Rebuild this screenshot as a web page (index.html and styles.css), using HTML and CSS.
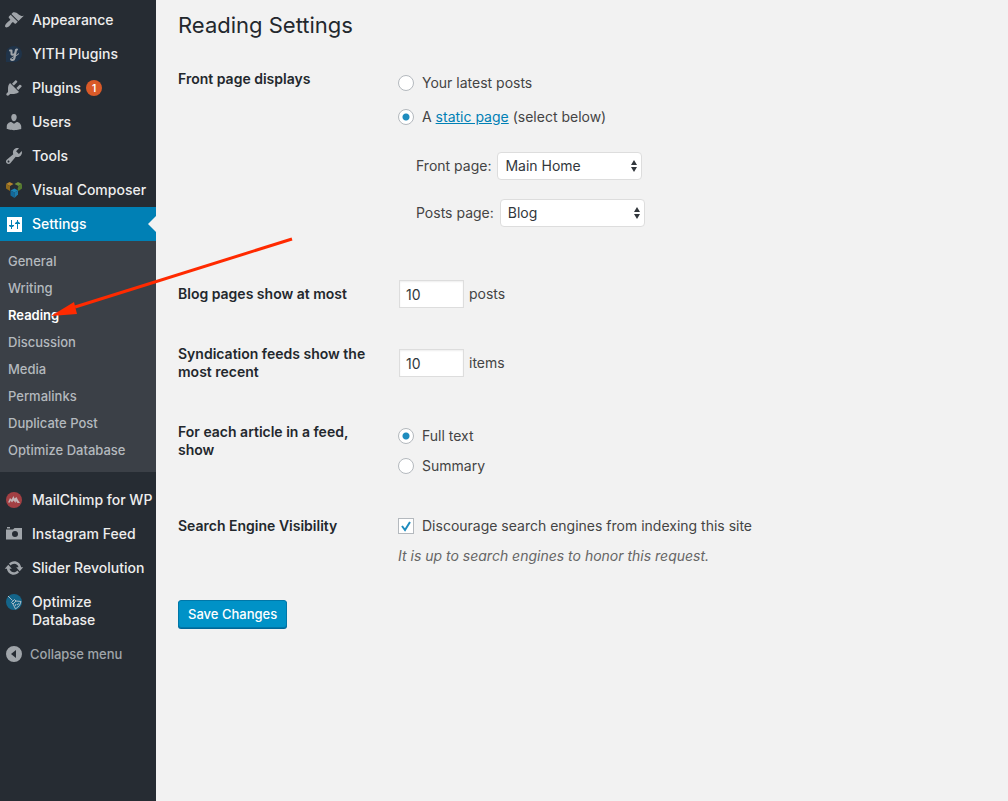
FILE: index.html
```html
<!DOCTYPE html>
<html lang="en">
<head>
    <meta charset="UTF-8">
    <meta name="viewport" content="width=device-width, initial-scale=1.0">
    <title>Reading Settings</title>
    <link rel="stylesheet" href="styles.css">
</head>
<body>
    <nav class="sidebar">
        <ul class="menu">
            <li><a class="menu-item" href="#">
                <svg class="icon" viewBox="0 0 20 20"><path d="M14.48 11.06L7.41 3.99l1.5-1.5c.5-.56 2.3-.47 3.51.32 1.21.8 1.43 1.28 2.91 2.1 1.18.64 2.45 1.26 4.45.85zm-.71.71L6.7 4.7 4.93 6.47c-.39.39-.39 1.02 0 1.41l1.06 1.06c.39.39.39 1.03 0 1.42-.6.6-1.43 1.11-2.21 1.69-.35.26-.7.53-1.01.84C1.43 14.23.4 16.08 1.4 17.07c.99 1 2.84-.03 4.18-1.36.31-.31.58-.66.85-1.02.57-.78 1.08-1.61 1.69-2.21.39-.39 1.02-.39 1.41 0l1.06 1.06c.39.39 1.02.39 1.41 0z"/></svg>
                Appearance
            </a></li>
            <li><a class="menu-item" href="#">
                <svg class="icon" viewBox="0 0 20 20"><path fill="#1f3349" d="M10 2a8 8 0 1 1 0 16H2v-8a8 8 0 0 1 8-8z"/><path fill="none" stroke="#a0a5aa" stroke-width="2" stroke-linecap="round" stroke-linejoin="round" d="M6 6.500h1.500v3.500c.5 1.200 2.500 1 3.500-.5l1-3.500-1.500 8c-.5 2.500-3 2.500-3.500 1.200M12 6l1-.5"/><path fill="none" stroke="#a0a5aa" d="M7.500 14c2-1.500 5-2 7.500-4.500"/></svg>
                YITH Plugins
            </a></li>
            <li><a class="menu-item" href="#">
                <svg class="icon" viewBox="0 0 20 20"><path d="M13.110 4.360L9.870 7.600 8 5.730l3.240-3.240c.35-.34 1.050-.2 1.560.32.52.51.66 1.210.31 1.550zm-8 1.770l.91-1.120 9.010 9.010-1.190.84c-.71.71-2.630 1.160-3.820 1.160H6.140L4.900 17.260c-.59.59-1.540.59-2.120 0-.59-.58-.59-1.530 0-2.120l1.240-1.240v-3.880c0-1.130.4-3.190 1.090-3.890zm7.260 3.970l3.240-3.240c.34-.35 1.040-.21 1.550.31.52.51.66 1.210.31 1.550l-3.240 3.250z"/></svg>
                Plugins <span class="count">1</span>
            </a></li>
            <li><a class="menu-item" href="#">
                <svg class="icon" viewBox="0 0 20 20"><path d="M10 9.250c-2.270 0-2.730-3.440-2.730-3.440C7 4.020 7.820 2 9.970 2c2.160 0 2.980 2.020 2.710 3.810 0 0-.41 3.440-2.680 3.440zm0 2.570L12.720 10c2.390 0 4.520 2.330 4.520 4.530v2.490s-3.650 1.130-7.240 1.130c-3.650 0-7.240-1.130-7.240-1.130v-2.490c0-2.250 1.940-4.480 4.470-4.480z"/></svg>
                Users
            </a></li>
            <li><a class="menu-item" href="#">
                <svg class="icon" viewBox="0 0 20 20"><path d="M16.680 9.770c-1.340 1.340-3.300 1.670-4.950.99l-5.410 6.520c-.99.99-2.590.99-3.580 0s-.99-2.590 0-3.570l6.520-5.420c-.68-1.650-.35-3.610.99-4.950 1.280-1.280 3.120-1.620 4.720-1.060l-2.890 2.890 2.820 2.820 2.860-2.870c.53 1.580.18 3.390-1.080 4.650zM3.810 16.210c.4.39 1.040.39 1.430 0 .4-.4.4-1.040 0-1.430-.39-.4-1.030-.4-1.430 0-.39.39-.39 1.030 0 1.430z"/></svg>
                Tools
            </a></li>
            <li><a class="menu-item" href="#">
                <svg class="icon" viewBox="0 0 20 20"><path fill="#b5842c" d="M2 4l3.500-2L9.500 4 6 6z"/><path fill="#8f6a1e" d="M2 4l4 2v5l-4-2.500z"/><path fill="#6f8f3a" d="M10.500 4l3.500-2 4 2-3.500 2z"/><path fill="#557a30" d="M14.500 6L18 4v4.500L14.500 11l-1-2z"/><path fill="#1c86b8" d="M6.500 10.500l4-2 3.500 2-3.500 2z"/><path fill="#12699a" d="M6.500 10.500l4 2V18l-4-2.500z"/><path fill="#1c7aa9" d="M10.500 12.500l3.500-2v4l-3.500 3.500z"/></svg>
                Visual Composer
            </a></li>
            <li>
                <a class="menu-item current" href="#">
                    <svg class="icon" viewBox="0 0 20 20"><path d="M3 3h15v15H3z"/><path class="sliders" d="M7 6h1v5h2v1l-1.500 1H8v2H7v-2h-.500L5 12v-1h2zM13 6h1v1.500l2 1.500v1h-2v5h-1v-5h-2V9l2-1.500z"/></svg>
                    Settings
                </a>
                <ul class="submenu">
                    <li><a href="#">General</a></li>
                    <li><a href="#">Writing</a></li>
                    <li><a class="active" href="#">Reading</a></li>
                    <li><a href="#">Discussion</a></li>
                    <li><a href="#">Media</a></li>
                    <li><a href="#">Permalinks</a></li>
                    <li><a href="#">Duplicate Post</a></li>
                    <li><a href="#">Optimize Database</a></li>
                </ul>
            </li>
            <li><a class="menu-item" href="#">
                <svg class="icon" viewBox="0 0 20 20"><circle cx="10" cy="10" r="8" fill="#a33f43"/><path fill="#c5b3b5" d="M4 12.500l2-4.500 1.500 1.500L9.500 6l1 2.500L12.500 7l1.500 3 2 3h-2.500l-1.500-2-.5 2-2-2.500-1.500 2-1.500-2-.5 2z"/></svg>
                MailChimp for WP
            </a></li>
            <li><a class="menu-item" href="#">
                <svg class="icon" viewBox="0 0 20 20"><path fill-rule="evenodd" d="M3 3h3v1.500H3zM2 5.500h7L10.500 4H18v11.500H2zM11 7a3 3 0 1 0 0 6 3 3 0 0 0 0-6z"/></svg>
                Instagram Feed
            </a></li>
            <li><a class="menu-item" href="#">
                <svg class="icon" viewBox="0 0 20 20"><path d="M10.200 3.280c3.530 0 6.430 2.610 6.920 6h2.080l-3.500 4-3.500-4h2.320c-.45-1.970-2.210-3.450-4.320-3.450-1.450 0-2.730.71-3.540 1.780L4.950 5.660C6.230 4.200 8.110 3.280 10.200 3.280zm-.4 13.440c-3.520 0-6.430-2.610-6.920-6H.8l3.500-4c1.170 1.330 2.330 2.670 3.500 4H5.480c.45 1.970 2.210 3.450 4.320 3.450 1.450 0 2.730-.71 3.540-1.780l1.710 1.950c-1.280 1.460-3.150 2.380-5.250 2.380z"/></svg>
                Slider Revolution
            </a></li>
            <li><a class="menu-item" href="#">
                <svg class="icon" viewBox="0 0 20 20"><circle cx="10" cy="10" r="8" fill="#14658a"/><path fill="none" stroke="#a9bcc8" stroke-width="1" stroke-linejoin="round" d="M4 4l4.500 4.500M7.500 10.500l3-3 1.500 1.500 5 .5-1.500 4-4 3.500-2.500-5zM9 12l3-3M11 14l1-2M13 13l2-1.500"/></svg>
                Optimize Database
            </a></li>
        </ul>
        <button class="collapse" type="button">
            <svg class="icon" viewBox="0 0 20 20"><path fill-rule="evenodd" d="M10 2a8 8 0 1 0 0 16 8 8 0 0 0 0-16zM12 6v8l-5-4z"/></svg>
            Collapse menu
        </button>
    </nav>

    <main class="content">
        <h1>Reading Settings</h1>
        <form>
            <div class="row" role="radiogroup" aria-labelledby="frontLabel">
                <span class="heading" id="frontLabel">Front page displays</span>
                <div class="field front">
                    <div class="option"><input type="radio" id="latest" name="front"><label for="latest">Your latest posts</label></div>
                    <div class="option"><input type="radio" id="static" name="front" checked><label for="static">A <a href="#">static page</a> (select below)</label></div>
                    <div class="pages">
                        <div class="page">
                            <label for="frontPage">Front page:</label>
                            <span class="select">
                                <select id="frontPage"><option>Main Home</option></select>
                                <svg viewBox="0 0 6 12"><path d="M0 5l3-5 3 5zM0 7h6l-3 5z"/></svg>
                            </span>
                        </div>
                        <div class="page">
                            <label for="postsPage">Posts page:</label>
                            <span class="select">
                                <select id="postsPage"><option>Blog</option></select>
                                <svg viewBox="0 0 6 12"><path d="M0 5l3-5 3 5zM0 7h6l-3 5z"/></svg>
                            </span>
                        </div>
                    </div>
                </div>
            </div>
            <div class="row">
                <label class="heading" for="blogPages">Blog pages show at most</label>
                <div class="field amount"><input type="text" id="blogPages" value="10"> posts</div>
            </div>
            <div class="row">
                <label class="heading" for="feedItems">Syndication feeds show the most recent</label>
                <div class="field amount"><input type="text" id="feedItems" value="10"> items</div>
            </div>
            <div class="row" role="radiogroup" aria-labelledby="feedLabel">
                <span class="heading" id="feedLabel">For each article in a feed, show</span>
                <div class="field feed">
                    <div class="option"><input type="radio" id="full" name="feed" checked><label for="full">Full text</label></div>
                    <div class="option"><input type="radio" id="summary" name="feed"><label for="summary">Summary</label></div>
                </div>
            </div>
            <div class="row">
                <span class="heading">Search Engine Visibility</span>
                <div class="field visibility">
                    <div class="option">
                        <span class="check">
                            <input type="checkbox" id="discourage" checked>
                            <svg viewBox="0 0 14 14"><path d="M3 7l3 4 5-8"/></svg>
                        </span>
                        <label for="discourage">Discourage search engines from indexing this site</label>
                    </div>
                    <p class="description">It is up to search engines to honor this request.</p>
                </div>
            </div>
            <button class="save" type="submit">Save Changes</button>
        </form>
    </main>

    <svg class="arrow" viewBox="0 0 244 82"><path d="M241 3L24 71" fill="none" stroke="#ff2a00" stroke-width="3"/><path d="M0 80l23-14 3 12z" fill="#ff2a00"/></svg>
</body>
</html>
```

FILE: styles.css
```css
* {
    box-sizing: border-box;
}

body {
    position: relative;
    display: flex;
    min-height: 100vh;
    margin: 0;
    background: #f2f2f2;
    color: #444;
    font-family: Inter, sans-serif;
    font-size: 14px;
    line-height: 18px;
}

ul {
    margin: 0;
    padding: 0;
    list-style: none;
}

/* Sidebar */
.sidebar {
    flex: none;
    width: 156px;
    padding-top: 3px;
    background: #262c33;
}

.menu-item {
    position: relative;
    display: flex;
    align-items: flex-start;
    gap: 8px;
    padding: 8px 0 8px 4px;
    color: #eee;
    font-weight: 500;
    text-decoration: none;
}

.icon {
    flex: none;
    width: 20px;
    height: 20px;
    margin: -1px 0;
    fill: #a0a5aa;
}

.count {
    width: 16px;
    height: 16px;
    margin: 1px 0 0 -3px;
    border-radius: 8px;
    background: #d95a28;
    color: #fff;
    font-size: 10px;
    font-weight: 600;
    line-height: 16px;
    text-align: center;
}

.current {
    background: #0080b5;
    color: #fff;
}

.current .icon {
    fill: #fff;
}

.current .sliders {
    fill: #0080b5;
}

.current::after {
    content: "";
    position: absolute;
    top: 9px;
    right: 0;
    border: 8px solid transparent;
    border-left-width: 0;
    border-right-color: #f2f2f2;
}

.submenu {
    margin-bottom: 11px;
    padding: 7px 0 8px;
    background: #3b4047;
}

.submenu a {
    display: block;
    padding: 4px 8px 5px;
    color: #b4b9be;
    font-size: 13px;
    font-weight: 500;
    text-decoration: none;
}

.submenu .active {
    color: #fff;
    font-weight: 600;
}

.collapse {
    display: flex;
    gap: 6px;
    width: 100%;
    padding: 8px 4px;
    border: 0;
    background: none;
    color: #a0a5aa;
    font: 500 13px/18px Inter, sans-serif;
}

/* Settings form */
.content {
    flex: 1;
    padding: 9px 22px;
}

h1 {
    margin: 0 0 29px;
    color: #23282d;
    font-size: 22px;
    font-weight: 400;
    line-height: 32px;
}

.row {
    display: grid;
    grid-template-columns: 200px 1fr;
    gap: 20px;
    margin-bottom: 42px;
}

.row:last-of-type {
    margin-bottom: 35px;
}

.heading {
    color: #23282d;
    font-weight: 600;
}

.option {
    display: flex;
    align-items: center;
    gap: 8px;
}

.option a {
    color: #0080b5;
}

.front {
    display: grid;
    gap: 16px;
    padding: 4px 0 16px;
}

.pages {
    display: grid;
    gap: 19px;
    padding: 10px 18px 0;
}

.page {
    display: flex;
    align-items: center;
    gap: 6px;
}

input[type="radio"],
input[type="checkbox"] {
    appearance: none;
    display: block;
    width: 16px;
    height: 16px;
    margin: 0;
    border: 1px solid #b4b9be;
    background: #fff;
}

input[type="radio"] {
    border-radius: 50%;
}

input[type="radio"]:checked {
    background: radial-gradient(circle, #1e8cbe 3px, #fff 4px);
}

.check,
.select {
    position: relative;
}

.check svg {
    position: absolute;
    top: 1px;
    left: 1px;
    width: 14px;
    height: 14px;
    fill: none;
    stroke: #1e8cbe;
    stroke-width: 2;
    pointer-events: none;
}

select {
    appearance: none;
    display: block;
    width: 145px;
    height: 28px;
    padding: 0 7px;
    border: 1px solid #ddd;
    border-radius: 4px;
    background: #fff;
    color: #32373c;
    font: inherit;
}

.select svg {
    position: absolute;
    top: 8px;
    right: 5px;
    width: 6px;
    height: 12px;
    fill: #32373c;
    pointer-events: none;
}

.amount {
    display: flex;
    align-items: center;
    gap: 5px;
    margin: -5px 0;
}

.amount input {
    width: 65px;
    height: 28px;
    margin-left: 1px;
    padding: 0 6px;
    border: 1px solid #ddd;
    background: #fff;
    box-shadow: inset 0 1px 2px rgba(0, 0, 0, 0.07);
    color: #32373c;
    font: inherit;
}

.feed {
    display: grid;
    gap: 12px;
    padding-top: 4px;
}

.description {
    margin: 12px 0 0;
    color: #666;
    font-style: italic;
}

.save {
    height: 28px;
    padding: 0 9px;
    border: 1px solid #0077a8;
    border-radius: 3px;
    background: #0092c7;
    box-shadow: 0 1px 0 #006799;
    color: #fff;
    font: 500 13px/26px Inter, sans-serif;
}

/* Pointer to the open submenu entry */
.arrow {
    position: absolute;
    top: 236px;
    left: 51px;
    width: 244px;
    height: 82px;
    pointer-events: none;
}
```
